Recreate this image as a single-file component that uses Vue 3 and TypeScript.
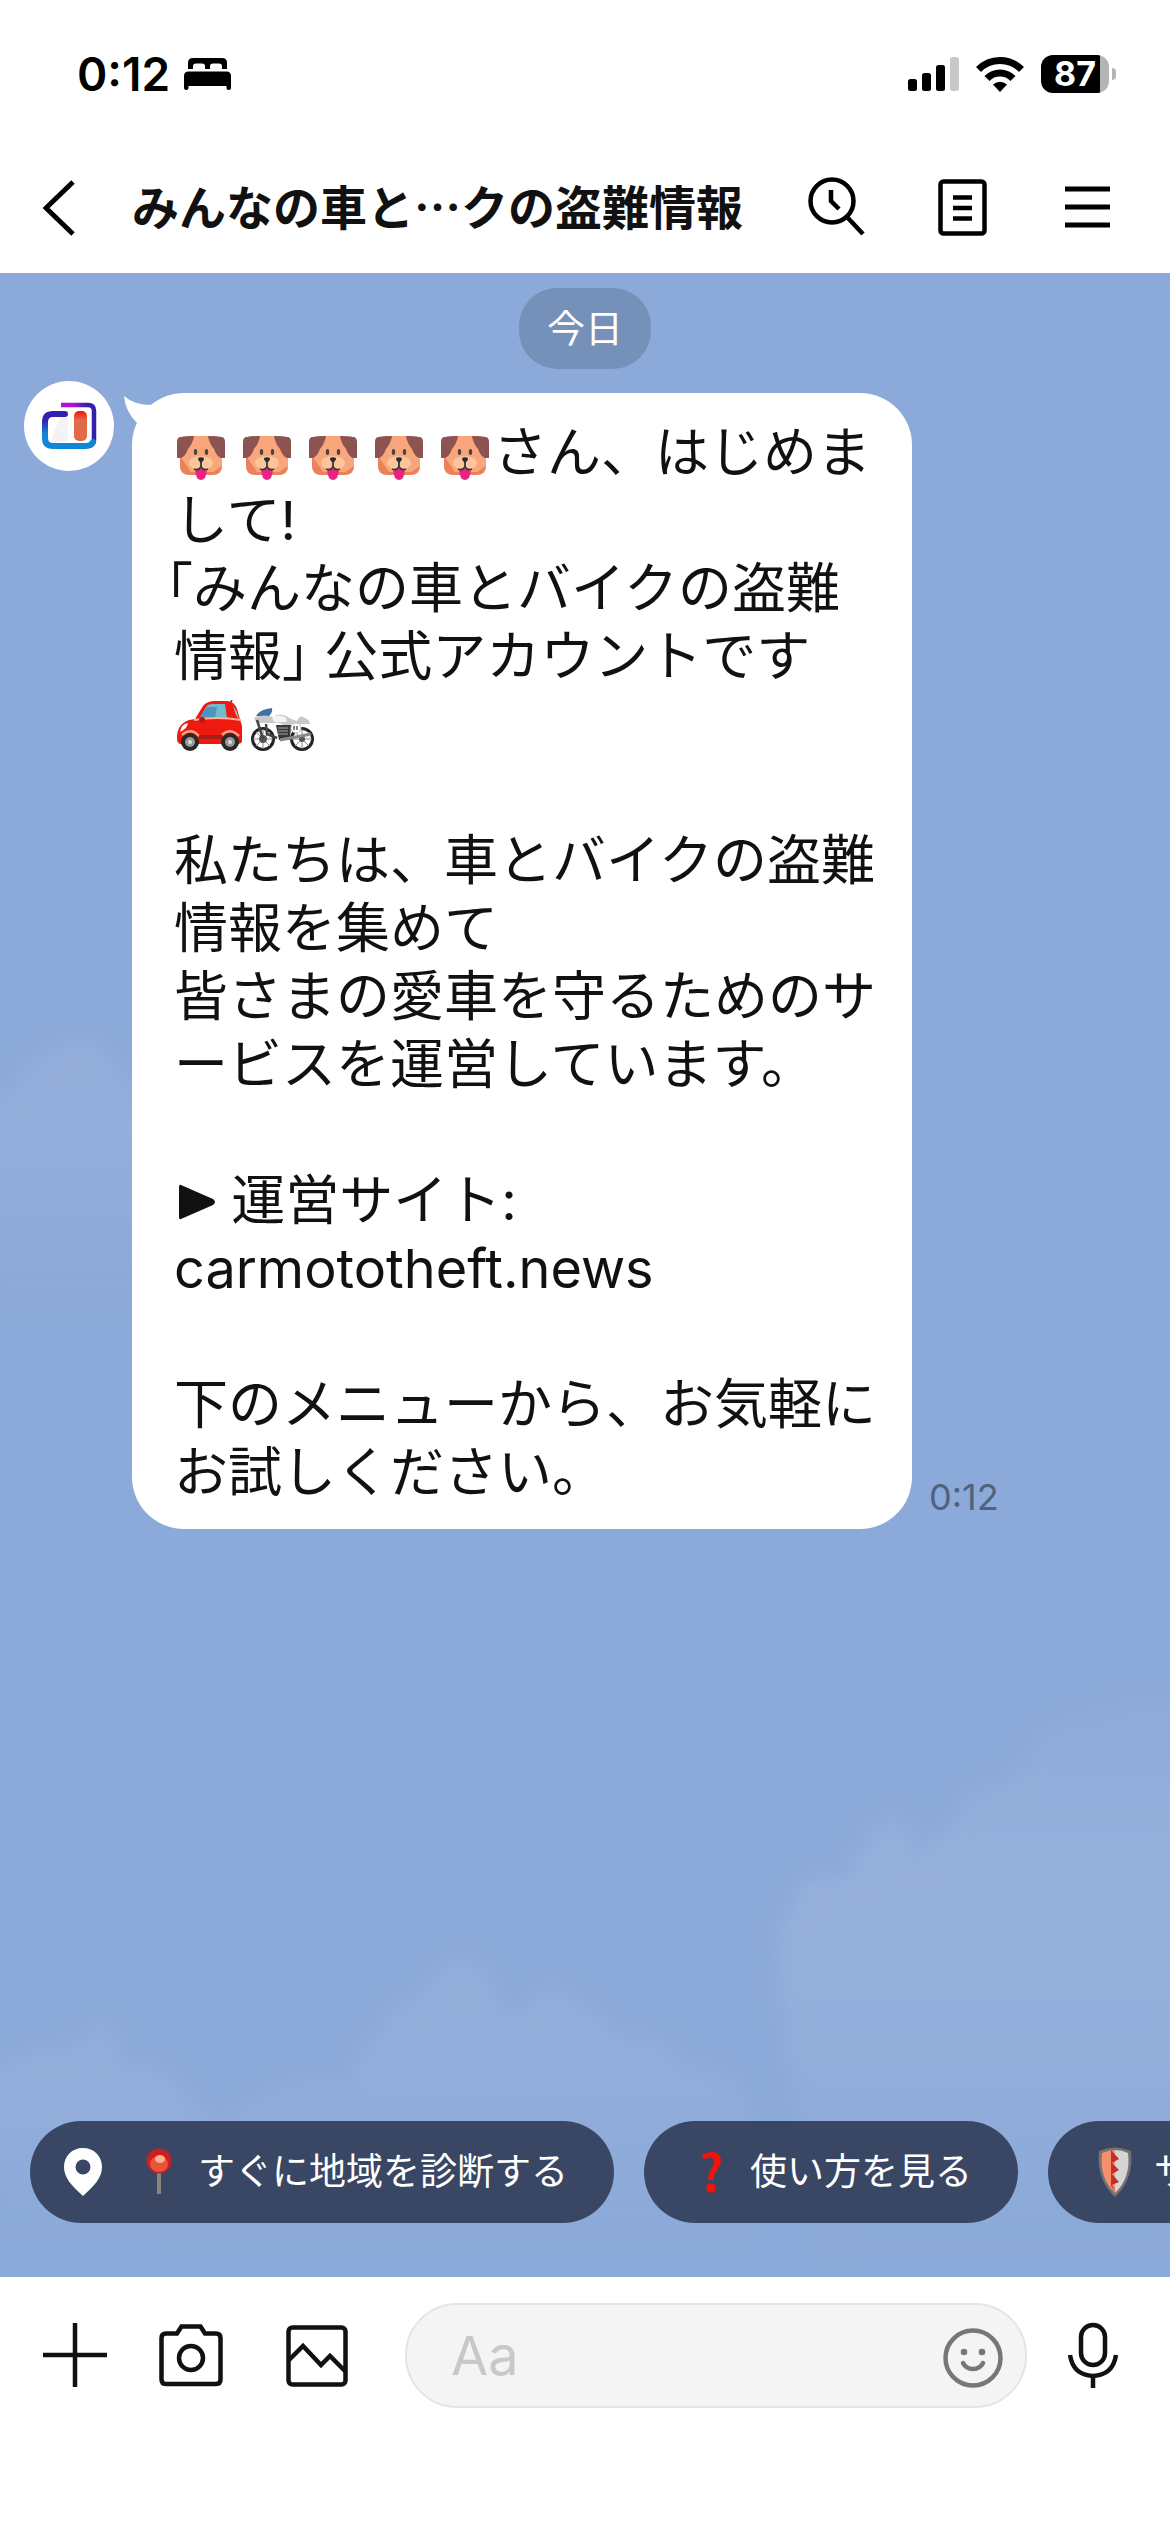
<script setup lang="ts">
import { ref } from 'vue'

interface Chip {
  label: string
  icon: 'pin' | 'question' | 'shield'
  location?: boolean
}

const draft = ref<string>('')
const dogs: number[] = [1, 2, 3, 4, 5]

const chips: Chip[] = [
  { label: 'すぐに地域を診断する', icon: 'pin', location: true },
  { label: '使い方を見る', icon: 'question' },
  { label: 'サ', icon: 'shield' },
]
</script>

<template>
  <div class="screen">
    <div class="status">
      <div class="status-left">
        <span class="clock">0:12</span>
        <svg class="bed" viewBox="0 0 47 32" aria-hidden="true">
          <path d="M4 11V5Q4 0 9 0H38Q43 0 43 5V11H38V8Q38 5.500 35 5.500H29Q26 5.500 26 8V11H21V8Q21 5.500 18 5.500H12Q9 5.500 9 8V11Z" />
          <path d="M0 30V18Q0 13.500 4.500 13.500H42.500Q47 13.500 47 18V30Q47 32 44.700 32Q42.500 32 42.500 30V28H4.500V30Q4.500 32 2.300 32Q0 32 0 30Z" />
        </svg>
      </div>
      <div class="status-right">
        <svg class="signal" viewBox="0 0 51 36" aria-hidden="true">
          <rect x="0" y="23" width="9" height="12" rx="2.500" />
          <rect x="14" y="17" width="9" height="18" rx="2.500" />
          <rect x="28" y="9" width="9" height="26" rx="2.500" />
          <rect x="42" y="1" width="9" height="34" rx="2.500" fill="#c8c8c8" />
        </svg>
        <svg class="wifi" viewBox="0 0 48 36" aria-hidden="true">
          <path d="M2.500 13.500A30 30 0 0 1 45.500 13.500" fill="none" stroke="#000" stroke-width="7" />
          <path d="M11 22.500A18 18 0 0 1 37 22.500" fill="none" stroke="#000" stroke-width="7" />
          <path d="M17 28.500Q24 23 31 28.500L24 36Z" />
        </svg>
        <div class="battery">
          <span class="level">87</span>
          <span class="nub"></span>
        </div>
      </div>
    </div>

    <header class="header">
      <button class="back" type="button" aria-label="戻る">
        <svg viewBox="0 0 32 56"><path d="M30 2L3 28L30 54" fill="none" stroke="#000" stroke-width="5" /></svg>
      </button>
      <h1 class="title">みんなの車と…クの盗難情報</h1>
      <div class="actions">
        <button type="button" aria-label="検索">
          <svg viewBox="0 0 64 64" fill="none" stroke="#000" stroke-width="4.500">
            <circle cx="28" cy="25" r="21.500" />
            <path d="M43 41L59 58M27 14V25L35 33" />
          </svg>
        </button>
        <button type="button" aria-label="ノート">
          <svg viewBox="0 0 64 64" fill="none" stroke="#000" stroke-width="4.500">
            <rect x="10.500" y="5.500" width="44" height="52" rx="3" />
            <path d="M23 21.500H42M23 32H42M23 42.500H42" />
          </svg>
        </button>
        <button type="button" aria-label="メニュー">
          <svg viewBox="0 0 64 64" fill="none" stroke="#000" stroke-width="5">
            <path d="M9 13H54M9 31H54M9 49H54" />
          </svg>
        </button>
      </div>
    </header>

    <main class="chat">
      <svg class="sky" viewBox="0 273 1170 2004" preserveAspectRatio="none" aria-hidden="true">
        <defs>
          <filter id="soft" x="-10%" y="-10%" width="120%" height="120%"><feGaussianBlur stdDeviation="9" /></filter>
          <linearGradient id="fadeA" x1="0" y1="0" x2="0" y2="1">
            <stop offset="0" stop-color="#98b1dd" /><stop offset="0.400" stop-color="#96b0dc" /><stop offset="1" stop-color="#8caad9" stop-opacity="0" />
          </linearGradient>
          <linearGradient id="fadeB" x1="0" y1="0" x2="0" y2="1">
            <stop offset="0" stop-color="#90add9" /><stop offset="0.350" stop-color="#9ab3dd" /><stop offset="0.650" stop-color="#95b0db" /><stop offset="1" stop-color="#8caad9" stop-opacity="0" />
          </linearGradient>
        </defs>
        <g filter="url(#soft)" opacity="0.750">
          <path fill="url(#fadeA)" d="M-20 1105Q15 1100 22 1075Q50 1050 70 1045Q95 1038 110 1062L150 1110V1310H-20Z" />
          <path fill="url(#fadeB)" d="M1190 1705Q1110 1700 1095 1722Q1040 1722 1032 1760Q1015 1785 968 1795Q960 1830 930 1835L915 1868Q918 1820 890 1820Q870 1825 868 1845Q850 1860 848 1880Q800 1870 795 1905Q775 1930 780 1975Q785 2020 790 2060L830 2260H1190Z" />
          <path fill="url(#fadeA)" d="M220 2125Q270 2090 305 2085Q340 2075 350 2095Q355 2050 380 2040Q390 2005 420 2000Q440 1960 470 1965Q490 1970 496 2010Q530 2018 540 1995Q570 1985 575 2010Q605 2010 612 2040Q670 2035 680 2070Q740 2070 745 2110V2240H180Z" />
          <path fill="url(#fadeA)" d="M-20 2070Q20 2065 45 2050Q85 2055 90 2035Q110 2010 116 2065Q170 2070 182 2090Q190 2120 230 2125V2230H-20Z" />
        </g>
      </svg>

      <div class="day">今日</div>

      <section class="message">
        <div class="avatar">
          <svg viewBox="0 0 90 90" role="img" aria-label="みんなの車とバイクの盗難情報">
            <defs>
              <linearGradient id="frameL" x1="0" y1="0" x2="0" y2="1"><stop offset="0.200" stop-color="#3320b0" /><stop offset="0.600" stop-color="#0f86d6" /></linearGradient>
              <linearGradient id="frameR" x1="0" y1="0" x2="1" y2="0"><stop offset="0.400" stop-color="#b010d8" /><stop offset="0.750" stop-color="#3320b0" /></linearGradient>
              <linearGradient id="bar" x1="0" y1="0" x2="0" y2="1"><stop offset="0" stop-color="#f01808" /><stop offset="0.300" stop-color="#e2694a" /></linearGradient>
            </defs>
            <path d="M26 62L36 36H44V60Z" fill="#f3f3f5" />
            <path d="M37 24H64Q70 24 70 30V59Q70 64 65 65" fill="none" stroke="url(#frameR)" stroke-width="4.500" />
            <path d="M41 33H29Q21 33 21 41V57Q21 65 29 65H62Q67 65 69 61" fill="none" stroke="url(#frameL)" stroke-width="6" stroke-linecap="round" />
            <rect x="50" y="30" width="13" height="30" rx="5" fill="url(#bar)" />
          </svg>
        </div>
        <div class="bubble">
          <svg class="tail" viewBox="0 0 40 44" aria-hidden="true">
            <path d="M0 3Q10 12 28 12L40 44H16Q14 36 13 30Q1 18 0 3Z" fill="#fff" />
          </svg>
          <p class="line">
            <svg v-for="n in dogs" :key="n" class="dog" viewBox="0 0 48 44" role="img" aria-label="犬">
              <rect x="3" y="0" width="42" height="39" rx="9" fill="#f9a67c" />
              <path d="M3 20V30Q3 39 13 39H35Q45 39 45 30L36 36H14Z" fill="#e9825a" />
              <path d="M4 1Q8 0 17 0Q16 7 11 13Q8 21 4 22H0V6Q0 1 4 1Z" fill="#8c5350" />
              <path d="M44 1Q40 0 31 0Q32 7 37 13Q40 21 44 22H48V6Q48 1 44 1Z" fill="#8c5350" />
              <ellipse cx="24" cy="27" rx="12" ry="7" fill="#fdc59b" />
              <ellipse cx="18.500" cy="16" rx="1.700" ry="3" fill="#454545" />
              <ellipse cx="29.500" cy="16" rx="1.700" ry="3" fill="#454545" />
              <path d="M21 22Q24 20.500 27 22Q27 25 24 26.500Q21 25 21 22Z" fill="#2c2c30" />
              <path d="M18 35Q24 30 30 35L28 42Q24 46 20 42Z" fill="#ea2284" />
              <path d="M24 25V31M17 33Q21 35 24 31Q27 35 31 33" fill="none" stroke="#383338" stroke-width="1.800" />
            </svg>さん、はじめま
          </p>
          <p class="line">して!</p>
          <p class="line"><span class="half open">「</span>みんなの車とバイクの盗難</p>
          <p class="line">情報<span class="half">」</span> 公式アカウントです</p>
          <p class="line">
            <svg class="vehicle" viewBox="0 0 66 52" role="img" aria-label="車">
              <path d="M53 4L55 0" stroke="#444" stroke-width="1.500" />
              <path d="M0 38Q0 24 12 20L18 19L26 6Q30 1 38 1H50Q57 1 60 9L65 26V41Q65 44 60 44H4Q0 44 0 38Z" fill="#ee1a10" />
              <path d="M22 19L29 7Q31 4 35 4H48L50 18Z" fill="#72b9cf" />
              <path d="M24 15L30 7H40L38 18H23Z" fill="#4f94bd" />
              <path d="M56 6Q60 10 62 20L59 15Z" fill="#8fc4d2" />
              <path d="M17 20Q40 16 64 20" stroke="#ffb19a" stroke-width="2" fill="none" />
              <path d="M3 32Q4 24 11 23Q10 29 3 32Z" fill="#fff" />
              <path d="M5 35Q14 27 22 36M45 35Q53 27 62 36" stroke="#ff9d7e" stroke-width="2.500" fill="none" />
              <circle cx="25" cy="20" r="3" fill="#bd160d" />
              <rect x="22" y="35" width="23" height="4" fill="#aa1d16" />
              <circle cx="13" cy="42" r="9" fill="#292929" /><circle cx="13" cy="42" r="5" fill="#999" /><circle cx="13" cy="42" r="2" fill="#ddd" />
              <circle cx="53" cy="42" r="9" fill="#292929" /><circle cx="53" cy="42" r="5" fill="#999" /><circle cx="53" cy="42" r="2" fill="#ddd" />
            </svg><svg class="vehicle" viewBox="0 0 66 52" role="img" aria-label="バイク">
              <g fill="none" stroke="#242424" stroke-width="3">
                <circle cx="13" cy="39" r="10.500" /><circle cx="52" cy="39" r="10.500" />
              </g>
              <g stroke="#8c8c8c" stroke-width="1">
                <path d="M13 29V49M3 39H23M6 32L20 46M20 32L6 46M52 29V49M42 39H62M45 32L59 46M59 32L45 46" />
              </g>
              <circle cx="13" cy="39" r="4" fill="#555" /><circle cx="52" cy="39" r="3" fill="#555" />
              <path d="M6 16Q10 9 22 8Q23 12 19 16Z" fill="#426fa6" />
              <path d="M5 17Q15 14 23 17Q28 13 36 16Q42 20 47 21Q50 14 55 18Q60 20 60 24H42L37 28Q31 22 25 23H8Q3 20 5 17Z" fill="#c9c9c9" />
              <path d="M22 17Q28 14 35 17Q38 20 36 22H24Z" fill="#f4f4f4" />
              <path d="M7 20L13 39M16 24L17 34L27 38" fill="none" stroke="#444" stroke-width="2.500" />
              <path d="M26 25H41L40 40H29Z" fill="#373737" />
              <path d="M28 28H38M28 31H38M28 34H38" stroke="#aaa" stroke-width="1" />
              <path d="M30 40L61 34" stroke="#8a8a8a" stroke-width="3" />
              <circle cx="46" cy="28" r="5" fill="#fff" stroke="#bbb" stroke-width="1" />
              <path d="M44 26V30M47 26V30" stroke="#333" stroke-width="1.200" />
            </svg>
          </p>
          <p class="line"></p>
          <p class="line">私たちは、車とバイクの盗難</p>
          <p class="line">情報を集めて</p>
          <p class="line">皆さまの愛車を守るためのサ</p>
          <p class="line">ービスを運営しています。</p>
          <p class="line"></p>
          <p class="line">
            <svg class="play" viewBox="0 0 42 36" aria-hidden="true">
              <path d="M7 1L39 15Q43 18 39 21L7 35Q5 36 5 33V3Q5 0 7 1Z" fill="#111" />
            </svg> 運営サイト:
          </p>
          <p class="line"><a class="site" href="#">carmototheft.news</a></p>
          <p class="line"></p>
          <p class="line">下のメニューから、お気軽に</p>
          <p class="line">お試しください。</p>
        </div>
        <time class="time">0:12</time>
      </section>

      <nav class="chips" aria-label="クイック返信">
        <button v-for="chip in chips" :key="chip.label" class="chip" type="button">
          <svg v-if="chip.location" class="marker" viewBox="0 0 38 48" aria-hidden="true">
            <path fill="#fff" fill-rule="evenodd" d="M19 0C30 0 38 8 38 19C38 30 30 38 19 48C8 38 0 30 0 19C0 8 8 0 19 0ZM19 11.500A7.500 7.500 0 1 0 19 26.500A7.500 7.500 0 1 0 19 11.500Z" />
          </svg>
          <svg v-if="chip.icon === 'pin'" class="emoji" viewBox="0 0 42 50" aria-hidden="true">
            <rect x="19" y="23" width="4" height="24" fill="#8a8482" />
            <ellipse cx="21" cy="14" rx="12.500" ry="12.500" fill="#c9211f" />
            <ellipse cx="21" cy="17" rx="9" ry="8" fill="#e6553b" />
            <ellipse cx="22" cy="12" rx="5" ry="4" fill="#ffb08d" />
          </svg>
          <svg v-else-if="chip.icon === 'question'" class="emoji" viewBox="0 0 42 50" aria-hidden="true">
            <path d="M12 8Q20 3 27 6Q33 10 30 18Q28 22 25 26Q23 29 24 33H18Q18 28 20 24Q24 19 24 15Q24 10 19 11Q15 12 13 12Z" fill="#f0140c" />
            <circle cx="21" cy="41" r="4.800" fill="#f0140c" />
          </svg>
          <svg v-else class="emoji" viewBox="0 0 42 50" aria-hidden="true">
            <path d="M5 4Q21 -3 37 4Q40 32 21 50Q2 32 5 4Z" fill="#737373" />
            <path d="M8 6Q15 3 21 3V46Q5 31 8 6Z" fill="#f58f6c" />
            <path d="M21 3Q28 3 34 6Q37 31 21 46Z" fill="#d5d5d5" />
            <path d="M17 3L25 12L18 16L25 23L18 27L25 35L18 38L22 46L17 39Z" fill="#c2302c" />
          </svg>
          <span>{{ chip.label }}</span>
        </button>
      </nav>
    </main>

    <footer class="composer">
      <button type="button" aria-label="追加">
        <svg viewBox="0 0 64 64" fill="none" stroke="#111" stroke-width="4.500"><path d="M0 32H64M32 0V64" /></svg>
      </button>
      <button class="camera" type="button" aria-label="カメラ">
        <svg viewBox="0 0 64 64" fill="none" stroke="#111" stroke-width="4.500">
          <path d="M7 10.500H18L22.500 3.500H41.500L46 10.500H57Q61.500 10.500 61.500 15V56.500Q61.500 61 57 61H7Q2.500 61 2.500 56.500V15Q2.500 10.500 7 10.500Z" />
          <circle cx="32" cy="35" r="12" />
        </svg>
      </button>
      <button class="gallery" type="button" aria-label="写真">
        <svg viewBox="0 0 64 64" fill="none" stroke="#111" stroke-width="4.500">
          <rect x="3.500" y="4.500" width="57" height="57" rx="4" />
          <path d="M4 37L18 23L36 42L45 33L60 48" />
        </svg>
      </button>
      <div class="field">
        <input v-model="draft" type="text" placeholder="Aa" aria-label="メッセージを入力" />
        <button type="button" aria-label="スタンプ">
          <svg viewBox="0 0 64 64" fill="none" stroke="#777" stroke-width="4.500">
            <circle cx="32" cy="34" r="27.500" />
            <circle cx="23" cy="28" r="3.300" fill="#777" stroke="none" />
            <circle cx="41" cy="28" r="3.300" fill="#777" stroke="none" />
            <path d="M22 39Q25 45 32 45Q39 45 42 39" stroke-linecap="round" />
          </svg>
        </button>
      </div>
      <button class="mic" type="button" aria-label="音声">
        <svg viewBox="0 0 64 64" fill="none" stroke="#111" stroke-width="4.500">
          <rect x="20" y="2" width="24" height="40" rx="12" />
          <path d="M9 32Q12 52 32 53Q52 52 55 32M32 53V65" />
        </svg>
      </button>
    </footer>
  </div>
</template>

<style>
body {
  margin: 0;
  background: #fff;
}
</style>

<style scoped>
.screen {
  display: flex;
  flex-direction: column;
  min-height: 100vh;
  overflow: hidden;
  background: #fff;
  color: #111;
  font-family: Inter, "Noto Sans CJK JP", sans-serif;
}

svg {
  display: block;
}

button {
  flex: none;
  margin: 0;
  padding: 0;
  border: 0;
  background: none;
  font: inherit;
}

.status {
  display: flex;
  align-items: center;
  justify-content: space-between;
  height: 148px;
  padding: 0 54px 0 77px;
  color: #000;
}

.status-left,
.status-right {
  display: flex;
  align-items: center;
}

.status-left {
  gap: 14px;
}

.status-right {
  gap: 17px;
}

.clock {
  font-size: 46px;
  font-weight: 600;
  line-height: 56px;
}

.bed {
  width: 47px;
  height: 32px;
}

.signal {
  width: 51px;
  height: 36px;
}

.wifi {
  width: 48px;
  height: 36px;
}

.battery {
  display: flex;
  align-items: center;
  gap: 3px;
}

.level {
  width: 68px;
  border-radius: 12px;
  background: linear-gradient(90deg, #000 59px, #b4b4b4 59px);
  color: #fff;
  font-size: 34px;
  font-weight: 700;
  line-height: 38px;
  text-align: center;
}

.nub {
  width: 4px;
  height: 12px;
  border-radius: 0 4px 4px 0;
  background: #b4b4b4;
}

.header {
  display: flex;
  align-items: center;
  box-sizing: border-box;
  height: 125px;
  padding: 0 50px 5px 43px;
}

.back svg {
  width: 32px;
  height: 56px;
}

.title {
  flex: 1;
  margin: 0 0 0 57px;
  padding-bottom: 6px;
  overflow: hidden;
  font-family: "Noto Sans CJK JP", sans-serif;
  font-size: 47px;
  font-weight: 700;
  line-height: 68px;
  white-space: nowrap;
}

.actions {
  display: flex;
  gap: 62px;
}

.actions svg,
.composer button svg {
  width: 64px;
  height: 64px;
  overflow: visible;
}

.chat {
  position: relative;
  display: flex;
  flex: 1;
  flex-direction: column;
  overflow: hidden;
  background: #8caad9;
}

.sky {
  position: absolute;
  inset: 0;
  width: 100%;
  height: 100%;
}

.day {
  position: relative;
  align-self: center;
  margin-top: 15px;
  padding: 0 28px;
  border-radius: 38px;
  background: #7591b9;
  color: #fff;
  font-size: 38px;
  line-height: 81px;
}

.message {
  position: relative;
  display: flex;
  align-items: flex-start;
  margin: 12px 0 60px 24px;
}

.avatar {
  flex: none;
  width: 90px;
  height: 90px;
  border-radius: 50%;
  background: #fff;
}

.bubble {
  position: relative;
  box-sizing: border-box;
  width: 780px;
  margin: 12px 17px 0 18px;
  padding: 26px 0 22px 42px;
  border-radius: 52px;
  background: #fff;
}

.tail {
  position: absolute;
  top: 0;
  left: -8px;
  width: 40px;
  height: 44px;
}

.line {
  height: 68px;
  margin: 0;
  font-size: 54px;
  line-height: 68px;
  white-space: nowrap;
}

.line svg {
  display: inline-block;
  vertical-align: -8px;
}

.half {
  font-feature-settings: "halt";
}

/* hang the opening bracket into the margin */
.open {
  margin-left: -8px;
}

.dog {
  width: 48px;
  height: 44px;
  margin: 0 15px 0 3px;
}

.dog:last-of-type {
  margin-right: 4px;
}

.vehicle {
  width: 66px;
  height: 52px;
  margin: 0 4px 0 3px;
}

.play {
  width: 42px;
  height: 36px;
}

.line .play {
  vertical-align: 0;
}

.site {
  color: inherit;
  text-decoration: none;
}

.time {
  align-self: flex-end;
  margin-bottom: 10px;
  color: #50627e;
  font-size: 36px;
  line-height: 44px;
}

.chips {
  position: relative;
  display: flex;
  gap: 30px;
  margin: auto 0 54px;
  padding-left: 30px;
}

.chip {
  display: flex;
  align-items: center;
  height: 102px;
  padding: 0 46px;
  border-radius: 51px;
  background: #394664;
  color: #fff;
  font-size: 37px;
  line-height: 52px;
  white-space: nowrap;
}

.marker {
  width: 38px;
  height: 48px;
  margin: 0 36px 0 -12px;
}

.emoji {
  width: 42px;
  height: 50px;
  margin-right: 18px;
}

.composer {
  display: flex;
  align-items: flex-start;
  padding: 26px 45px 124px 43px;
}

.composer > button {
  margin-top: 20px;
}

.composer .camera {
  margin-left: 52px;
}

.composer .gallery {
  margin-left: 62px;
}

.field {
  display: flex;
  flex: 1;
  align-items: center;
  box-sizing: border-box;
  min-width: 0;
  height: 105px;
  margin: 0 34px 0 56px;
  padding: 0 20px 0 44px;
  border: 2px solid #e5e5e5;
  border-radius: 52px;
  background: #f4f4f4;
}

.field input {
  flex: 1;
  min-width: 0;
  padding: 0;
  border: 0;
  outline: 0;
  background: none;
  color: #111;
  font-family: inherit;
  font-size: 54px;
  line-height: 68px;
}

.field input::placeholder {
  color: #c8c8c8;
  opacity: 1;
}
</style>
